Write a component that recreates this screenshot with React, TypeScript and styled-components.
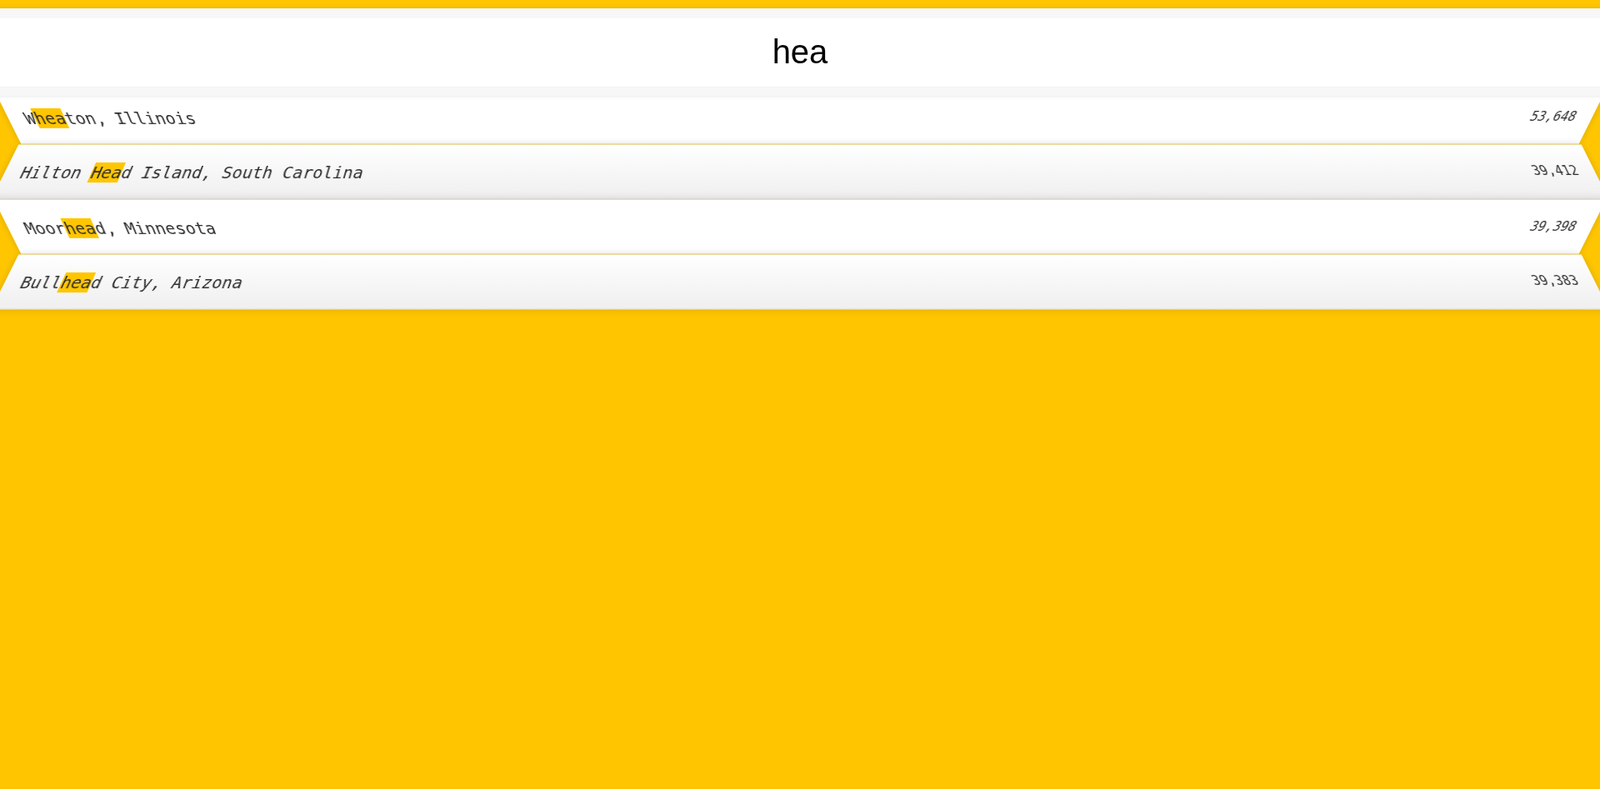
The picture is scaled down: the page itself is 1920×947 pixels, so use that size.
import React, { useMemo, useState } from 'react';
import styled, { createGlobalStyle, css } from 'styled-components';

const GlobalStyle = createGlobalStyle`
  html {
    box-sizing: border-box;
    background: #ffc600;
    font-family: "Liberation Sans", Arial, sans-serif;
    font-size: 20px;
    font-weight: 200;
  }
  *, *::before, *::after {
    box-sizing: inherit;
  }
  body {
    margin: 0;
    min-height: 100vh;
    background: #ffc600;
    overflow-x: hidden;
  }
`;

const SearchForm = styled.form`
  margin: 0;
  overflow-x: clip;
`;

const SearchInput = styled.input`
  display: block;
  width: 120%;
  margin: 0;
  padding: 20px;
  text-align: center;
  outline: 0;
  border: 10px solid #f7f7f7;
  border-radius: 5px;
  position: relative;
  left: -10%;
  top: 10px;
  z-index: 2;
  background: #fff;
  color: #000;
  caret-color: #000;
  font-family: "Liberation Sans", Arial, sans-serif;
  font-size: 40px;
  font-weight: 400;
  box-shadow: 0 0 5px rgba(0, 0, 0, 0.12), inset 0 0 2px rgba(0, 0, 0, 0.19);
`;

const Suggestions = styled.ul`
  margin: 0;
  padding: 0 8px;
  position: relative;
`;

const Suggestion = styled.li<{ $even: boolean }>`
  list-style: none;
  margin: 0;
  padding: 22px 20px 18px;
  display: flex;
  justify-content: space-between;
  text-transform: capitalize;
  border-bottom: 1px solid #e6dcbc;
  box-shadow: 0 0 10px rgba(0, 0, 0, 0.14);
  font-family: "DejaVu Sans Mono", "Liberation Mono", monospace;
  font-size: 20px;
  line-height: 25px;
  color: #2e2e2e;
  transition: background 0.2s;
  ${(p) =>
    p.$even
      ? css`
          transform: perspective(100px) rotateX(3deg) translateY(2px) scale(1.001);
          background: linear-gradient(to bottom, #ffffff 0%, #efefef 100%);
        `
      : css`
          transform: perspective(100px) rotateX(-3deg) translateY(3px);
          background: #ffffff;
        `}
`;

const Name = styled.span``;

const Population = styled.span`
  font-size: 15px;
  line-height: 20px;
`;

const Highlight = styled.span`
  background: #ffc600;
`;

type City = { city: string; state: string; population: string };

const cities: City[] = [
  { city: 'New York', state: 'New York', population: '8405837' },
  { city: 'Los Angeles', state: 'California', population: '3884307' },
  { city: 'Chicago', state: 'Illinois', population: '2718782' },
  { city: 'Houston', state: 'Texas', population: '2195914' },
  { city: 'Philadelphia', state: 'Pennsylvania', population: '1553165' },
  { city: 'Phoenix', state: 'Arizona', population: '1513367' },
  { city: 'San Antonio', state: 'Texas', population: '1409019' },
  { city: 'San Diego', state: 'California', population: '1355896' },
  { city: 'Dallas', state: 'Texas', population: '1257676' },
  { city: 'San Jose', state: 'California', population: '998537' },
  { city: 'Boston', state: 'Massachusetts', population: '645966' },
  { city: 'Wheaton', state: 'Illinois', population: '53648' },
  { city: 'Rocklin', state: 'California', population: '59738' },
  { city: 'Hilton Head Island', state: 'South Carolina', population: '39412' },
  { city: 'Moorhead', state: 'Minnesota', population: '39398' },
  { city: 'Bullhead City', state: 'Arizona', population: '39383' },
  { city: 'Leesburg', state: 'Virginia', population: '47673' },
];

function withCommas(x: string) {
  return x.replace(/\B(?=(\d{3})+(?!\d))/g, ',');
}

function escapeRegex(s: string) {
  return s.replace(/[.*+?^${}()|[\]\\]/g, '\\$&');
}

function highlight(text: string, term: string): React.ReactNode[] {
  if (!term) return [text];
  const regex = new RegExp(`(${escapeRegex(term)})`, 'gi');
  return text.split(regex).map((part, i) =>
    i % 2 === 1 ? <Highlight key={i}>{part}</Highlight> : <React.Fragment key={i}>{part}</React.Fragment>
  );
}

export default function App() {
  const [query, setQuery] = useState('hea');

  const matches = useMemo(() => {
    if (!query) return [];
    const regex = new RegExp(escapeRegex(query), 'gi');
    return cities.filter((p) => p.city.match(regex) || p.state.match(regex));
  }, [query]);

  return (
    <>
      <GlobalStyle />
      <SearchForm onSubmit={(e) => e.preventDefault()}>
        <SearchInput
          type="text"
          autoFocus
          value={query}
          onChange={(e) => setQuery(e.target.value)}
          placeholder="City or State"
        />
        <Suggestions>
          {matches.map((place, i) => (
            <Suggestion key={place.city} $even={i % 2 === 1}>
              <Name>
                {highlight(place.city, query)}, {highlight(place.state, query)}
              </Name>
              <Population>{withCommas(place.population)}</Population>
            </Suggestion>
          ))}
        </Suggestions>
      </SearchForm>
    </>
  );
}
